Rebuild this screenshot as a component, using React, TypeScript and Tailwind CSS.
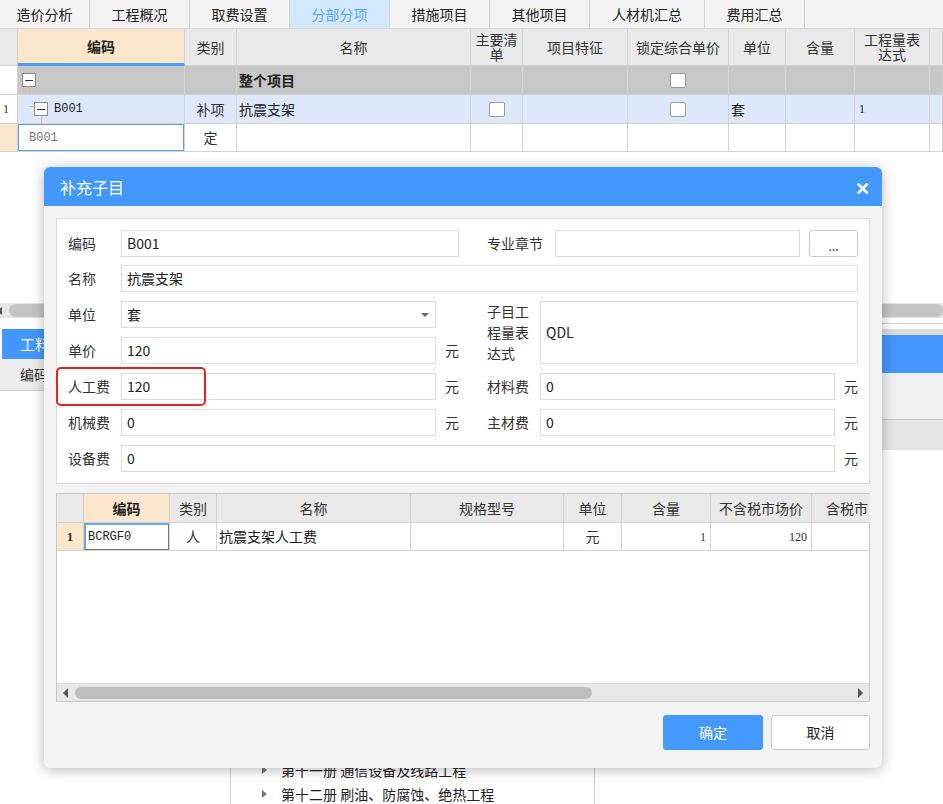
import React from 'react';

const font = "[font-family:'Noto_Sans_CJK_SC','Liberation_Sans',sans-serif]";
const mono = "[font-family:'Liberation_Mono','Noto_Sans_CJK_SC',monospace]";
const serif = "[font-family:'Liberation_Serif','Noto_Sans_CJK_SC',serif]";

const tabs = [
  { name: '造价分析', w: 'w-[90px]' },
  { name: '工程概况', w: 'w-[100px]' },
  { name: '取费设置', w: 'w-[100px]' },
  { name: '分部分项', w: 'w-[100px]', active: true },
  { name: '措施项目', w: 'w-[100px]' },
  { name: '其他项目', w: 'w-[100px]' },
  { name: '人材机汇总', w: 'w-[115px]' },
  { name: '费用汇总', w: 'w-[100px]' },
];

const topCols =
  'grid grid-cols-[18px_167px_52px_234px_52px_105px_101px_57px_69px_75px_13px]';

function Check() {
  return <span className="block h-[15px] w-[16px] rounded-[2px] border border-[#9a9a9a] bg-white" />;
}

function MinusBox() {
  return (
    <span className="relative z-10 flex h-[14px] w-[14px] items-center justify-center border border-[#8c8c8c] bg-white">
      <span className="h-px w-[8px] bg-[#333]" />
    </span>
  );
}

function Cell({ className = '', children }: { className?: string; children?: React.ReactNode }) {
  return (
    <div className={`flex items-center border-b border-r border-[#d3d3d3] ${className}`}>{children}</div>
  );
}

function Field({ value = '', className = '' }: { value?: string; className?: string }) {
  return (
    <div className={`flex h-[27px] items-center border border-[#dcdcdc] bg-white px-[5px] text-[14px] text-[#222] ${className}`}>
      {value}
    </div>
  );
}

function Label({ children, className = '' }: { children: React.ReactNode; className?: string }) {
  return <div className={`flex h-[27px] items-center text-[14px] text-[#333] ${className}`}>{children}</div>;
}

const Yuan = () => <div className="flex h-[27px] items-center pl-[9px] text-[14px] text-[#333]">元</div>;

export default function App() {
  return (
    <div className={`relative h-[804px] w-[943px] overflow-hidden bg-white ${font}`}>
      {/* 顶部页签 */}
      <div className="flex h-[29px] border-b border-[#d6d6d6] bg-[#f3f3f3]">
        {tabs.map((t) => (
          <div
            key={t.name}
            className={`flex items-center justify-center border-r border-[#d6d6d6] text-[14px] ${t.w} ${
              t.active ? 'bg-[#d3e8fb] text-[#5ba6f2]' : 'text-[#222]'
            }`}
          >
            {t.name}
          </div>
        ))}
      </div>

      {/* 分部分项表格 */}
      <div className={`${topCols} text-[14px] text-[#333]`}>
        <Cell className="h-[37px] bg-[#e9e9e9]" />
        <Cell className="h-[37px] justify-center border-b-[3px] border-b-[#4d9ef0] bg-[#fde7cc] font-bold text-[#222]">编码</Cell>
        <Cell className="h-[37px] justify-center bg-[#e9e9e9]">类别</Cell>
        <Cell className="h-[37px] justify-center bg-[#e9e9e9]">名称</Cell>
        <Cell className="h-[37px] justify-center bg-[#e9e9e9] text-center leading-[15px]">主要清单</Cell>
        <Cell className="h-[37px] justify-center bg-[#e9e9e9]">项目特征</Cell>
        <Cell className="h-[37px] justify-center bg-[#e9e9e9]">锁定综合单价</Cell>
        <Cell className="h-[37px] justify-center bg-[#e9e9e9]">单位</Cell>
        <Cell className="h-[37px] justify-center bg-[#e9e9e9]">含量</Cell>
        <Cell className="h-[37px] justify-center bg-[#e9e9e9] px-[4px] text-center leading-[15px]">工程量表达式</Cell>
        <Cell className="h-[37px] bg-[#e9e9e9]" />

        {/* 整个项目 */}
        <Cell className="h-[29px] bg-white" />
        <Cell className="relative h-[29px] bg-[#c7c7c7] pl-[4px]">
          <MinusBox />
          <span className="absolute left-[11px] top-[21px] h-[22px] w-px bg-[#f4b66c]" />
        </Cell>
        <Cell className="h-[29px] bg-[#c7c7c7]" />
        <Cell className="h-[29px] bg-[#c7c7c7] pl-[2px] font-bold text-[#222]">整个项目</Cell>
        <Cell className="h-[29px] bg-[#c7c7c7]" />
        <Cell className="h-[29px] bg-[#c7c7c7]" />
        <Cell className="h-[29px] justify-center bg-[#c7c7c7]"><Check /></Cell>
        <Cell className="h-[29px] bg-[#c7c7c7]" />
        <Cell className="h-[29px] bg-[#c7c7c7]" />
        <Cell className="h-[29px] bg-[#c7c7c7]" />
        <Cell className="h-[29px] bg-[#c7c7c7]" />

        {/* B001 补项 */}
        <Cell className={`h-[29px] bg-white pl-[3px] text-[12px] ${serif}`}>1</Cell>
        <Cell className="relative h-[29px] bg-[#dde9fb] pl-[16px]">
          <span className="absolute left-[11px] top-[11px] h-px w-[6px] bg-[#f4b66c]" />
          <MinusBox />
          <span className="absolute left-[23px] top-[21px] h-[8px] w-px bg-[#f4b66c]" />
          <span className={`ml-[6px] text-[12px] text-[#222] ${mono}`}>B001</span>
        </Cell>
        <Cell className="h-[29px] justify-center bg-[#dde9fb]">补项</Cell>
        <Cell className="h-[29px] bg-[#dde9fb] pl-[2px] text-[#222]">抗震支架</Cell>
        <Cell className="h-[29px] justify-center bg-[#dde9fb]"><Check /></Cell>
        <Cell className="h-[29px] bg-[#dde9fb]" />
        <Cell className="h-[29px] justify-center bg-[#dde9fb]"><Check /></Cell>
        <Cell className="h-[29px] bg-[#dde9fb] pl-[2px] text-[#222]">套</Cell>
        <Cell className="h-[29px] bg-[#dde9fb]" />
        <Cell className={`h-[29px] bg-[#dde9fb] pl-[4px] text-[12px] text-[#222] ${serif}`}>1</Cell>
        <Cell className="h-[29px] bg-[#dde9fb]" />

        {/* 定额行 */}
        <Cell className="h-[28px] bg-[#fde7cc]" />
        <Cell className="h-[28px] bg-white">
          <div className={`flex h-full w-full items-center border border-[#5aa0ea] pl-[10px] text-[12px] text-[#777] ${mono}`}>B001</div>
        </Cell>
        <Cell className="h-[28px] justify-center">定</Cell>
        <Cell className="h-[28px]" />
        <Cell className="h-[28px]" />
        <Cell className="h-[28px]" />
        <Cell className="h-[28px]" />
        <Cell className="h-[28px]" />
        <Cell className="h-[28px]" />
        <Cell className="h-[28px]" />
        <Cell className="h-[28px]" />
      </div>

      {/* 下方区域 */}
      <div className="mt-[151px] flex h-[15px] items-center bg-[#e6e6e6]">
        <span className="ml-[-3px] h-0 w-0 border-y-[4px] border-r-[5px] border-y-transparent border-r-[#555]" />
        <span className="ml-[7px] h-[13px] flex-1 rounded-full bg-[#c4c4c4]" />
      </div>
      <div className="flex">
        <div className="w-[595px]">
          <div className="mt-[11px] flex h-[30px]">
            <div className="ml-[2px] flex w-[110px] items-center bg-[#4396fb] pl-[18px] text-[15px] text-white">工料机</div>
          </div>
          <div className="flex h-[32px] items-center border-b border-[#cfcfcf] bg-[#ececec] pl-[20px] text-[14px] text-[#333]">编码</div>
          <div className="flex h-[414px]">
            <div className="w-[230px]" />
            <div className="w-[365px] border-x border-[#cfcfcf] pt-[367px] text-[14px] text-[#222]">
              {['第十一册 通信设备及线路工程', '第十二册 刷油、防腐蚀、绝热工程'].map((t) => (
                <div key={t} className="flex h-[24px] items-center pl-[31px]">
                  <span className="mr-[14px] h-0 w-0 border-y-[4px] border-l-[5px] border-y-transparent border-l-[#777]" />
                  {t}
                </div>
              ))}
            </div>
          </div>
        </div>
        <div className="flex-1">
          <div className="mt-[5px] h-[6px] border-t border-[#d0d0d0] bg-white" />
          <div className="h-[6px] bg-[#dcdcdc]" />
          <div className="h-[38px] bg-[#4396fb]" />
          <div className="h-[47px] border-b border-[#c8c8c8] bg-[#f0f0f0]" />
          <div className="h-[30px] bg-[#e4e4e4]" />
        </div>
      </div>

      {/* 补充子目 对话框 */}
      <div className="absolute left-[44px] top-[167px] flex h-[601px] w-[838px] flex-col overflow-hidden rounded-[6px] bg-[#f3f3f3] shadow-[0_2px_14px_rgba(0,0,0,0.28)]">
        <div className="flex h-[39px] items-center justify-between bg-[#4398fd] pl-[16px] pr-[12px] text-white">
          <span className="text-[16px]">补充子目</span>
          <span className="text-[18px] font-bold leading-none">✕</span>
        </div>

        <div className="relative mx-[12px] mt-[12px] flex flex-col gap-[8px] border border-[#dcdcdc] bg-white px-[11px] pb-[11px] pt-[11px]">
          <div className="flex">
            <Label className="w-[53px]">编码</Label>
            <Field value="B001" className="w-[338px]" />
            <Label className="ml-[28px] w-[68px]">专业章节</Label>
            <Field className="w-[245px]" />
            <div className="ml-[9px] flex h-[27px] w-[49px] items-center justify-center rounded-[3px] border border-[#c9c9c9] bg-white pt-[4px] text-[12px] leading-none text-[#333]">
              ...
            </div>
          </div>
          <div className="flex">
            <Label className="w-[53px]">名称</Label>
            <Field value="抗震支架" className="w-[737px]" />
          </div>
          <div className="grid grid-cols-[53px_315px_51px_53px_295px_23px] grid-rows-[27px_27px_27px_27px_27px] gap-y-[9px] pt-px">
            <Label>单位</Label>
            <div className="flex h-[27px] items-center justify-between border border-[#dcdcdc] bg-white px-[5px] text-[14px] text-[#222]">
              套
              <span className="mr-[1px] h-0 w-0 border-x-[4px] border-t-[4px] border-x-transparent border-t-[#666]" />
            </div>
            <div />
            <div className="row-span-2 text-[14px] leading-[21px] text-[#333]">子目工程量表达式</div>
            <div className="col-span-2 row-span-2 flex items-center border border-[#dcdcdc] bg-white px-[5px] text-[14px] text-[#222]">
              QDL
            </div>
            <Label>单价</Label>
            <Field value="120" />
            <Yuan />
            <Label>人工费</Label>
            <Field value="120" />
            <Yuan />
            <Label>材料费</Label>
            <Field value="0" />
            <Yuan />
            <Label>机械费</Label>
            <Field value="0" />
            <Yuan />
            <Label>主材费</Label>
            <Field value="0" />
            <Yuan />
            <Label>设备费</Label>
            <Field value="0" className="col-span-4" />
            <Yuan />
          </div>
          {/* 红框标注 */}
          <div className="pointer-events-none absolute left-[-1px] top-[148px] h-[39px] w-[150px] rounded-[5px] border-2 border-[#e8201f]" />
        </div>

        {/* 人材机明细 */}
        <div className="mx-[12px] mt-[9px] flex h-[209px] flex-col border border-[#c9c9c9] bg-white">
          <div className="grid grid-cols-[27px_86px_47px_194px_153px_58px_89px_101px_58px] text-[14px] text-[#333]">
            <Cell className="h-[29px] bg-[#e9e9e9]" />
            <Cell className="h-[29px] justify-center bg-[#fde7cc] font-bold text-[#222]">编码</Cell>
            <Cell className="h-[29px] justify-center bg-[#e9e9e9]">类别</Cell>
            <Cell className="h-[29px] justify-center bg-[#e9e9e9]">名称</Cell>
            <Cell className="h-[29px] justify-center bg-[#e9e9e9]">规格型号</Cell>
            <Cell className="h-[29px] justify-center bg-[#e9e9e9]">单位</Cell>
            <Cell className="h-[29px] justify-center bg-[#e9e9e9]">含量</Cell>
            <Cell className="h-[29px] justify-center bg-[#e9e9e9]">不含税市场价</Cell>
            <Cell className="h-[29px] border-r-0 bg-[#e9e9e9] pl-[14px]">含税市</Cell>

            <Cell className={`h-[28px] justify-center bg-[#fde7cc] text-[13px] font-bold ${serif}`}>1</Cell>
            <Cell className="h-[28px]">
              <div className={`flex h-full w-full items-center border-l-2 border-t-2 border-r border-b border-l-[#6aa8ee] border-t-[#6aa8ee] border-r-[#777] border-b-[#777] pl-[2px] text-[12px] text-[#222] ${mono}`}>
                BCRGF0
              </div>
            </Cell>
            <Cell className="h-[28px] justify-center">人</Cell>
            <Cell className="h-[28px] pl-[2px] text-[#222]">抗震支架人工费</Cell>
            <Cell className="h-[28px]" />
            <Cell className="h-[28px] justify-center">元</Cell>
            <Cell className={`h-[28px] justify-end pr-[4px] text-[12px] ${serif}`}>1</Cell>
            <Cell className={`h-[28px] justify-end pr-[4px] text-[12px] ${serif}`}>120</Cell>
            <Cell className="h-[28px] border-r-0" />
          </div>
          <div className="flex-1" />
          <div className="flex h-[18px] items-center border-t border-[#dedede] bg-[#e8e8e8] pl-[6px] pr-[6px]">
            <span className="h-0 w-0 border-y-[5px] border-r-[5px] border-y-transparent border-r-[#555]" />
            <span className="ml-[7px] h-[12px] w-[517px] rounded-full bg-[#bdbdbd]" />
            <span className="flex-1" />
            <span className="h-0 w-0 border-y-[5px] border-l-[5px] border-y-transparent border-l-[#555]" />
          </div>
        </div>

        <div className="mr-[12px] mt-[13px] flex justify-end gap-[8px]">
          <div className="flex h-[35px] w-[100px] items-center justify-center rounded-[3px] bg-[#4499fd] text-[14px] text-white">确定</div>
          <div className="flex h-[35px] w-[99px] items-center justify-center rounded-[3px] border border-[#cacaca] bg-white text-[14px] text-[#222]">取消</div>
        </div>
      </div>
    </div>
  );
}
